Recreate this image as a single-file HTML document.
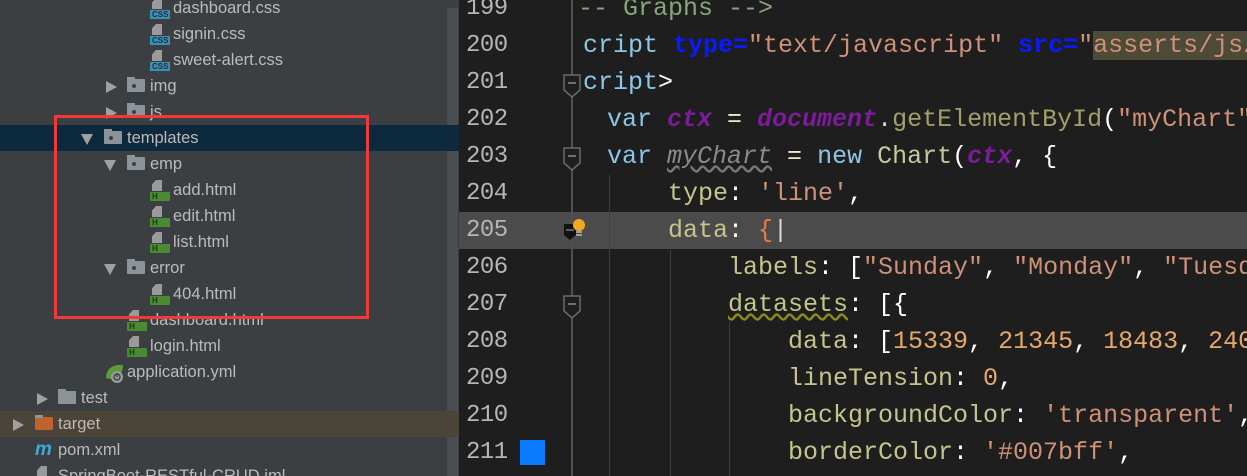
<!DOCTYPE html>
<html><head><meta charset="utf-8">
<style>
*{margin:0;padding:0;box-sizing:border-box}
body{width:1247px;height:476px;overflow:hidden;background:#1e1e1e;position:relative;font-family:"Liberation Sans",sans-serif}
#left{position:absolute;left:0;top:0;width:459px;height:476px;background:#3c3f41;overflow:hidden}
.row{position:absolute;left:0;width:459px;height:26px}
.t{position:absolute;font-size:16.5px;color:#bbbbbb;line-height:26px;top:0;white-space:nowrap}
.arr{position:absolute;top:8px;width:0;height:0;border-left:11px solid #a0a0a0;border-top:6px solid transparent;border-bottom:6px solid transparent}
.arrd{position:absolute;top:9px;width:0;height:0;border-top:11px solid #a0a0a0;border-left:6px solid transparent;border-right:6px solid transparent}
.fold{position:absolute;top:6px;width:18px;height:13px;background:#8c949a;border-radius:1px}
.fold:before{content:"";position:absolute;left:0;top:-2px;width:8px;height:3px;background:#8c949a}
.fold.d:after{content:"";position:absolute;left:5px;top:5px;width:4px;height:4px;border-radius:50%;background:#3c3f41}
.fi{position:absolute;top:3px;width:20px;height:21px}
.fi .pg{position:absolute;left:2px;top:0;width:10px;height:11px;background:#9a9a9a;clip-path:polygon(40% 0,100% 0,100% 100%,0 100%,0 40%)}
.fi .lb{position:absolute;left:0;bottom:0;width:20px;height:9px;font:bold 8px/9px "Liberation Sans",sans-serif;color:#20303a;padding-left:2px}
.css .lb{background:#3b8fb5}
.htm .lb{background:#4a8a32;color:#1c3a10}
#ed{position:absolute;left:459px;top:0;width:788px;height:476px;background:#1e1e1e;overflow:hidden}
.ln{position:absolute;left:7px;font:24px/37px "Liberation Mono",monospace;color:#b5b5b5;letter-spacing:-0.5px}
.cl{position:absolute;left:0;font:25px/37px "Liberation Mono",monospace;white-space:pre;color:#d4d4d4}
.mk{position:absolute;left:104px;width:18px;height:24px}
</style></head><body>
<div id="left">
  <div style="position:absolute;left:447px;top:8px;width:11px;height:468px;background:#4b4e50"></div>
  <!-- rows -->
  <div class="row" style="top:-5px"><div class="fi css" style="left:150px"><div class="pg"></div><div class="lb">CSS</div></div><div class="t" style="left:173px">dashboard.css</div></div>
  <div class="row" style="top:21px"><div class="fi css" style="left:150px"><div class="pg"></div><div class="lb">CSS</div></div><div class="t" style="left:173px">signin.css</div></div>
  <div class="row" style="top:47px"><div class="fi css" style="left:150px"><div class="pg"></div><div class="lb">CSS</div></div><div class="t" style="left:173px">sweet-alert.css</div></div>
  <div class="row" style="top:73px"><div class="arr" style="left:106px"></div><div class="fold d" style="left:127px"></div><div class="t" style="left:150px">img</div></div>
  <div class="row" style="top:99px"><div class="arr" style="left:106px"></div><div class="fold d" style="left:127px"></div><div class="t" style="left:150px">js</div></div>
  <div class="row" style="top:125px;background:#0d293e"><div class="arrd" style="left:81px"></div><div class="fold d" style="left:104px"></div><div class="t" style="left:127px">templates</div></div>
  <div class="row" style="top:151px"><div class="arrd" style="left:104px"></div><div class="fold d" style="left:127px"></div><div class="t" style="left:150px">emp</div></div>
  <div class="row" style="top:177px"><div class="fi htm" style="left:150px"><div class="pg"></div><div class="lb">H</div></div><div class="t" style="left:173px">add.html</div></div>
  <div class="row" style="top:203px"><div class="fi htm" style="left:150px"><div class="pg"></div><div class="lb">H</div></div><div class="t" style="left:173px">edit.html</div></div>
  <div class="row" style="top:229px"><div class="fi htm" style="left:150px"><div class="pg"></div><div class="lb">H</div></div><div class="t" style="left:173px">list.html</div></div>
  <div class="row" style="top:255px"><div class="arrd" style="left:104px"></div><div class="fold d" style="left:127px"></div><div class="t" style="left:150px">error</div></div>
  <div class="row" style="top:281px"><div class="fi htm" style="left:150px"><div class="pg"></div><div class="lb">H</div></div><div class="t" style="left:173px">404.html</div></div>
  <div class="row" style="top:307px"><div class="fi htm" style="left:127px"><div class="pg"></div><div class="lb">H</div></div><div class="t" style="left:150px">dashboard.html</div></div>
  <div class="row" style="top:333px"><div class="fi htm" style="left:127px"><div class="pg"></div><div class="lb">H</div></div><div class="t" style="left:150px">login.html</div></div>
  <div class="row" style="top:359px">
    <svg style="position:absolute;left:104px;top:3px" width="22" height="22" viewBox="0 0 22 22"><path d="M2 16 C2 6 10 2 19 3 C19 12 14 17 6 17 Z" fill="#5e9b3c"/><circle cx="13" cy="15" r="6" fill="#9a9a9a"/><circle cx="13" cy="15" r="3" fill="none" stroke="#3c3f41" stroke-width="1.3"/><path d="M13 11v4" stroke="#3c3f41" stroke-width="1.3"/></svg>
    <div class="t" style="left:127px">application.yml</div></div>
  <div class="row" style="top:385px"><div class="arr" style="left:37px"></div><div class="fold" style="left:58px"></div><div class="t" style="left:81px">test</div></div>
  <div class="row" style="top:411px;background:#4a4538"><div class="arr" style="left:13px"></div><div class="fold" style="left:35px;background:#c0622b"></div><div class="t" style="left:58px">target</div></div>
  <div class="row" style="top:437px"><div class="t" style="left:35px;color:#3fa8d8;font-style:italic;font-weight:bold;font-size:19px">m</div><div class="t" style="left:58px">pom.xml</div></div>
  <div class="row" style="top:463px"><div class="fi" style="left:35px"><div class="pg"></div></div><div class="t" style="left:58px">SpringBoot-RESTful-CRUD.iml</div></div>
  <div style="position:absolute;left:54px;top:115px;width:315px;height:204px;border:3px solid #f03a3a"></div>
</div>

<div id="ed">
  <div style="position:absolute;left:0;top:212px;width:788px;height:37px;background:#4b4b4b"></div>
  <!-- fold line & guides -->
  <div style="position:absolute;left:112px;top:0;width:2px;height:476px;background:#505050"></div>
  <div style="position:absolute;left:150px;top:175px;width:1px;height:301px;background:#39404a"></div>
  <div style="position:absolute;left:211px;top:250px;width:1px;height:226px;background:#39404a"></div>
  <div style="position:absolute;left:270px;top:322px;width:1px;height:154px;background:#39404a"></div>
  <!-- fold markers -->
  <svg class="mk" style="top:74px" viewBox="0 0 18 24"><path d="M1 1H17V16L9 23L1 16Z" fill="#1e1e1e" stroke="#6a6a6a" stroke-width="1.5"/><path d="M5 9H13" stroke="#8a8a8a" stroke-width="1.5"/></svg>
  <svg class="mk" style="top:147px" viewBox="0 0 18 24"><path d="M1 1H17V16L9 23L1 16Z" fill="#1e1e1e" stroke="#6a6a6a" stroke-width="1.5"/><path d="M5 9H13" stroke="#8a8a8a" stroke-width="1.5"/></svg>
  <svg class="mk" style="top:295px" viewBox="0 0 18 24"><path d="M1 1H17V16L9 23L1 16Z" fill="#1e1e1e" stroke="#6a6a6a" stroke-width="1.5"/><path d="M5 9H13" stroke="#8a8a8a" stroke-width="1.5"/></svg>
  <svg style="position:absolute;left:104px;top:218px" width="26" height="26" viewBox="0 0 26 26"><path d="M1 6H13V17L7 22L1 17Z" fill="#111"/><path d="M3 12H11" stroke="#777" stroke-width="1.5"/><circle cx="16" cy="7" r="6" fill="#f2a922"/><path d="M13 14H19M13 17H19" stroke="#bbb" stroke-width="1.5"/></svg>
  <div style="position:absolute;left:61px;top:440px;width:25px;height:25px;background:#0a7aff"></div>
  <!-- line numbers -->
  <div class="ln" style="top:-10px">199</div>
  <div class="ln" style="top:27px">200</div>
  <div class="ln" style="top:64px">201</div>
  <div class="ln" style="top:101px">202</div>
  <div class="ln" style="top:138px">203</div>
  <div class="ln" style="top:175px">204</div>
  <div class="ln" style="top:212px">205</div>
  <div class="ln" style="top:249px">206</div>
  <div class="ln" style="top:286px">207</div>
  <div class="ln" style="top:323px">208</div>
  <div class="ln" style="top:360px">209</div>
  <div class="ln" style="top:397px">210</div>
  <div class="ln" style="top:434px">211</div>
  <!-- code -->
  <div style="position:absolute;left:123px;top:0;width:665px;height:476px;overflow:hidden">
    <div class="cl" style="top:-10px;left:-4px;color:#8aa57a">-- Graphs --&gt;</div>
    <div class="cl" style="top:27px;left:1px"><span style="color:#8cc6e6">cript </span><b style="color:#0a1aff">type=</b><span style="color:#ce9178">"text/javascript" </span><b style="color:#0a1aff">src=</b><span style="color:#ce9178">"<span style="background:#4d4a38">asserts/js/</span></span></div>
    <div class="cl" style="top:64px;left:1px"><span style="color:#8cc6e6">cript</span><span style="color:#fff">&gt;</span></div>
    <div class="cl" style="top:101px;left:25px"><span style="color:#8cc6e6">var </span><i style="color:#7d1c9a;font-weight:bold">ctx</i><span style="color:#f0e6c8"> = </span><i style="color:#7d1c9a;font-weight:bold">document</i><span style="color:#d4d4d4">.</span><span style="color:#a0a06a">getElementById</span><span style="color:#fff">(</span><span style="color:#ce9178">"myChart"</span></div>
    <div class="cl" style="top:138px;left:25px"><span style="color:#8cc6e6">var </span><i style="color:#8a8a8a;text-decoration:underline wavy #777">myChart</i><span style="color:#f0e6c8"> = </span><span style="color:#8cc6e6">new </span><span style="color:#c8c8a0">Chart</span><span style="color:#fff">(</span><i style="color:#7d1c9a;font-weight:bold">ctx</i><span style="color:#fff">, {</span></div>
    <div class="cl" style="top:175px;left:86px"><span style="color:#c4c48c">type</span><span style="color:#fff">: </span><span style="color:#ce9178">'line'</span><span style="color:#fff">,</span></div>
    <div class="cl" style="top:212px;left:86px"><span style="color:#c4c48c">data</span><span style="color:#fff">: </span><span style="color:#f07a3a">{</span><span style="color:#ddd">|</span></div>
    <div class="cl" style="top:249px;left:146px"><span style="color:#c4c48c">labels</span><span style="color:#fff">: [</span><span style="color:#ce9178">"Sunday"</span><span style="color:#fff">, </span><span style="color:#ce9178">"Monday"</span><span style="color:#fff">, </span><span style="color:#ce9178">"Tuesday"</span></div>
    <div class="cl" style="top:286px;left:146px"><span style="color:#c4c48c;text-decoration:underline wavy #8a8a20">datasets</span><span style="color:#fff">: [{</span></div>
    <div class="cl" style="top:323px;left:206px"><span style="color:#c4c48c">data</span><span style="color:#fff">: [</span><span style="color:#e6a86a">15339</span><span style="color:#fff">, </span><span style="color:#e6a86a">21345</span><span style="color:#fff">, </span><span style="color:#e6a86a">18483</span><span style="color:#fff">, </span><span style="color:#e6a86a">24003</span></div>
    <div class="cl" style="top:360px;left:206px"><span style="color:#c4c48c">lineTension</span><span style="color:#fff">: </span><span style="color:#e6a86a">0</span><span style="color:#fff">,</span></div>
    <div class="cl" style="top:397px;left:206px"><span style="color:#c4c48c">backgroundColor</span><span style="color:#fff">: </span><span style="color:#ce9178">'transparent'</span><span style="color:#fff">,</span></div>
    <div class="cl" style="top:434px;left:206px"><span style="color:#c4c48c">borderColor</span><span style="color:#fff">: </span><span style="color:#ce9178">'#007bff'</span><span style="color:#fff">,</span></div>
  </div>
</div>
</body></html>
